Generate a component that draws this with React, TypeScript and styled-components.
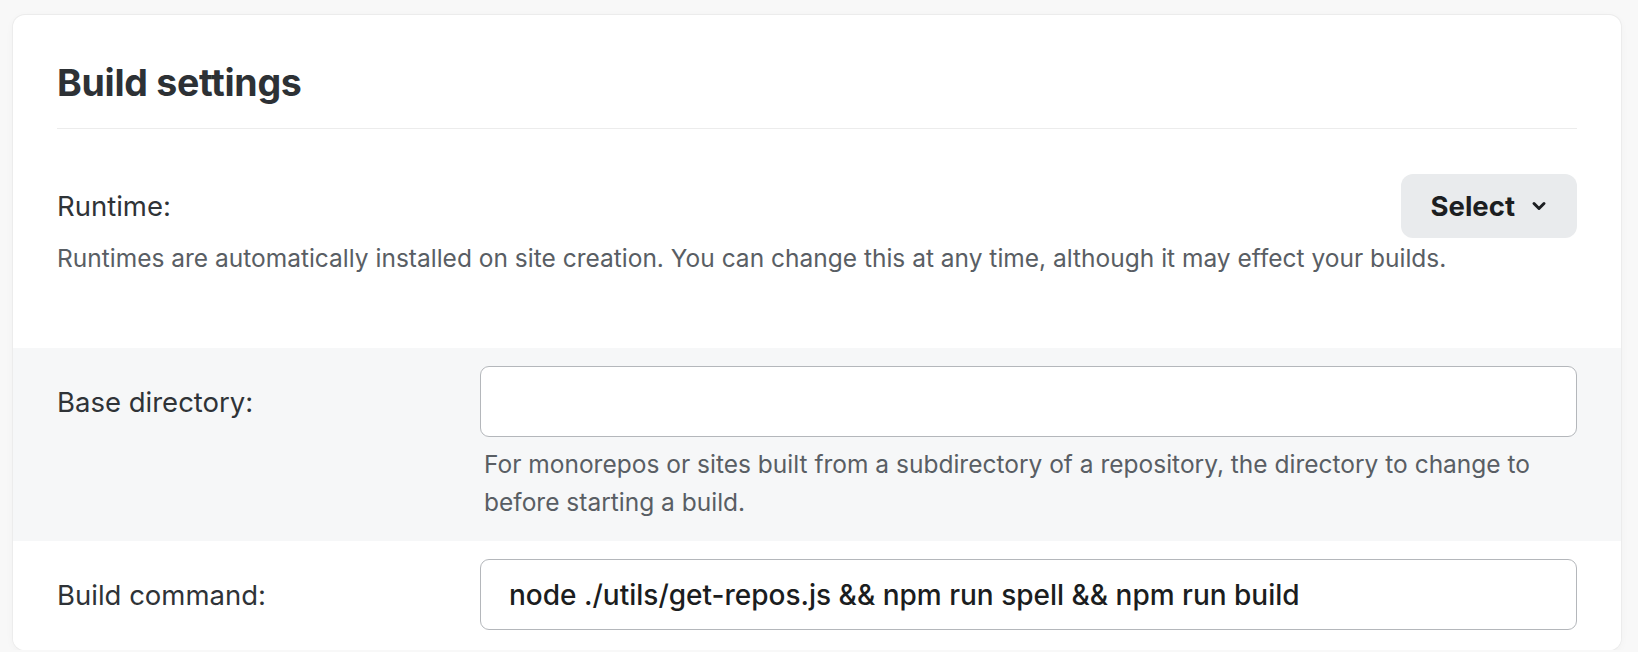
import { FunctionComponent } from 'react';
import styled, { createGlobalStyle } from 'styled-components';

const GlobalStyle = createGlobalStyle`
  html, body {
    margin: 0;
    padding: 0;
    background: #f8f8f8;
    font-family: Inter, "Noto Sans", "Liberation Sans", sans-serif;
    color: #2f3337;
  }
`;

const Card = styled.section`
  margin: 15px 17px 0 13px;
  background: #fff;
  border-radius: 12px;
  box-shadow: 0 0 0 1px #ececec, 0 2px 8px rgba(0, 0, 0, 0.04);
  overflow: hidden;
`;

const Header = styled.header`
  margin: 0 44px;
  padding: 45px 0 22px;
  border-bottom: 1px solid #ececec;
`;

const Title = styled.h2`
  margin: 0;
  font-size: 37.5px;
  line-height: 46px;
  font-weight: 700;
  letter-spacing: -0.3px;
  color: #2d3135;
`;

const Runtime = styled.div`
  padding: 45px 44px 72px;
`;

const RuntimeRow = styled.div`
  display: flex;
  align-items: center;
  justify-content: space-between;
`;

const Label = styled.label`
  font-size: 27.5px;
  line-height: 36px;
  color: #2f3337;
`;

const Description = styled.p`
  margin: 2px 0 0;
  font-size: 24.5px;
  line-height: 36px;
  color: #595e64;
`;

const SelectButton = styled.button`
  display: flex;
  align-items: center;
  gap: 16px;
  height: 64px;
  padding: 0 30px;
  border: 0;
  border-radius: 12px;
  background: #e9ebed;
  font-family: inherit;
  font-size: 27.5px;
  font-weight: 700;
  color: #1c1e21;
`;

const FieldRow = styled.div<{ $shaded?: boolean }>`
  display: grid;
  grid-template-columns: 423px 1fr;
  padding: ${p => (p.$shaded ? '18px 44px 20px' : '18px 44px 20px')};
  background: ${p => (p.$shaded ? '#f6f7f8' : '#fff')};
`;

const FieldLabel = styled(Label)`
  display: flex;
  align-items: center;
  height: 71px;
`;

const Input = styled.input`
  box-sizing: border-box;
  width: 100%;
  height: 71px;
  padding: 0 28px;
  border: 1px solid #b4b7bb;
  border-radius: 9px;
  background: #fff;
  font-family: inherit;
  font-size: 28px;
  font-weight: 500;
  color: #1b1d20;
  outline: none;
`;

const Help = styled.p`
  margin: 8px 0 0 4px;
  font-size: 24.5px;
  line-height: 38px;
  color: #595e64;
`;

const Chevron: FunctionComponent = () => (
  <svg width="16" height="12" viewBox="0 0 16 12" fill="none">
    <path d="M3 3.5 8 8.5l5-5" stroke="#1c1e21" strokeWidth="3" strokeLinecap="round" strokeLinejoin="round" />
  </svg>
);

const App: FunctionComponent = () => (
  <>
    <GlobalStyle />
    <Card>
      <Header>
        <Title>Build settings</Title>
      </Header>
      <Runtime>
        <RuntimeRow>
          <Label>Runtime:</Label>
          <SelectButton type="button">
            Select <Chevron />
          </SelectButton>
        </RuntimeRow>
        <Description>
          Runtimes are automatically installed on site creation. You can change this at any time, although it may effect your builds.
        </Description>
      </Runtime>
      <FieldRow $shaded>
        <FieldLabel htmlFor="base-dir">Base directory:</FieldLabel>
        <div>
          <Input id="base-dir" defaultValue="" />
          <Help>
            For monorepos or sites built from a subdirectory of a repository, the directory to change to
            <br />
            before starting a build.
          </Help>
        </div>
      </FieldRow>
      <FieldRow>
        <FieldLabel htmlFor="build-cmd">Build command:</FieldLabel>
        <Input id="build-cmd" defaultValue="node ./utils/get-repos.js && npm run spell && npm run build" />
      </FieldRow>
    </Card>
  </>
);

export default App;
